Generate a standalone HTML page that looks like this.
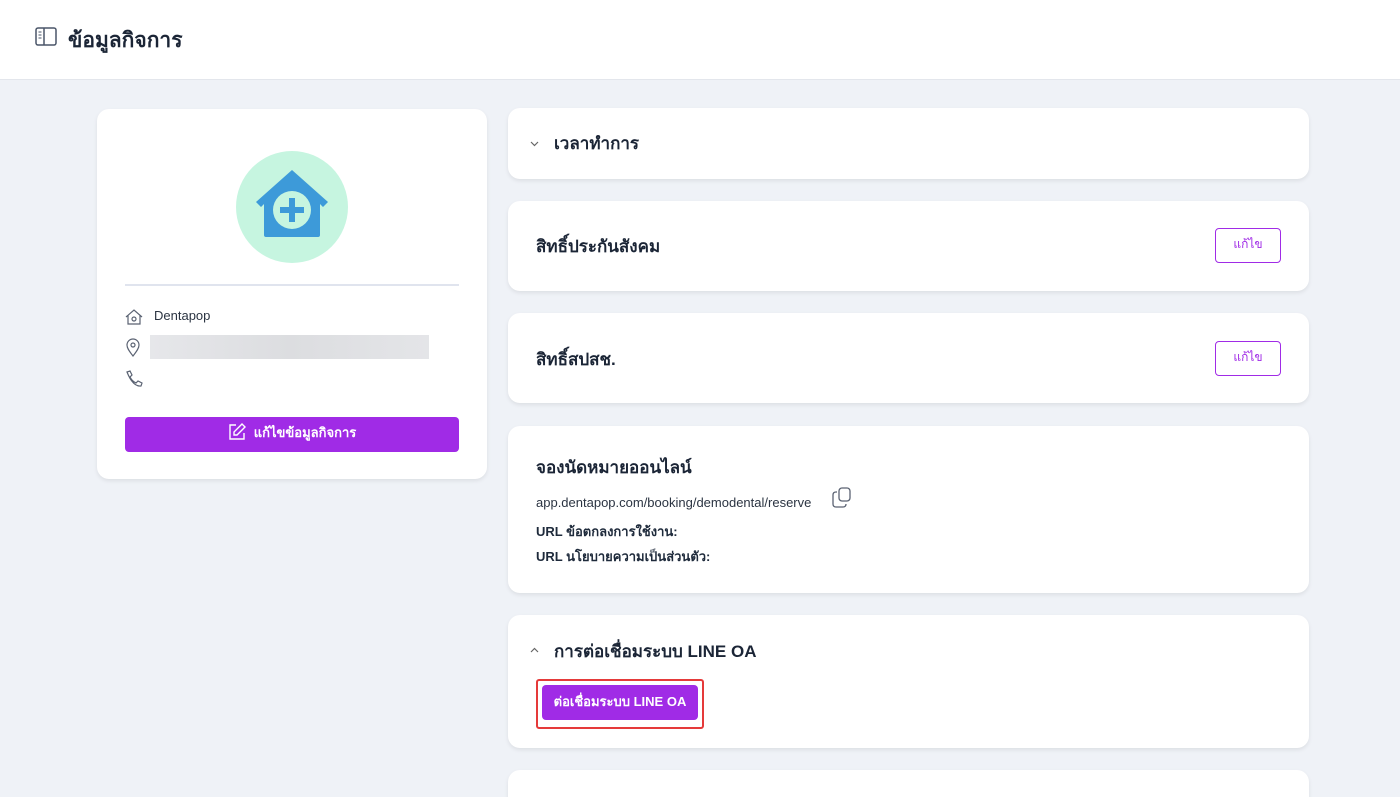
<!DOCTYPE html>
<html><head><meta charset="utf-8"><style>
*{box-sizing:border-box;margin:0;padding:0}
html,body{width:1400px;height:797px;overflow:hidden}
body{background:#eff2f7;font-family:"Liberation Sans","Noto Sans CJK SC",sans-serif;color:#1e2a3b;position:relative}
.hdr{position:absolute;left:0;top:0;width:1400px;height:80px;background:#fff;border-bottom:1px solid #e3e6ec}
.hdr h1{position:absolute;left:68px;top:24px;font-size:21px;font-weight:bold;color:#1b2536}
.card{position:absolute;background:#fff;border-radius:12px;box-shadow:0 2px 4px rgba(0,0,0,.08)}
.t{position:absolute;font-size:17px;font-weight:bold;color:#1b2536}
.ebtn{position:absolute;right:28px;width:66px;height:35px;border:1px solid #a02be6;border-radius:4px;color:#a02be6;font-size:12px;text-align:center;line-height:31px}
.pbtn{position:absolute;background:#a02be6;color:#fff;border-radius:4px;font-size:13px;font-weight:bold;text-align:center}
</style></head><body>
<div class="hdr">
<svg style="position:absolute;left:35px;top:27px" width="22" height="19" viewBox="0 0 22 19"><rect x="1" y="1" width="20" height="17" rx="2" fill="none" stroke="#4a5568" stroke-width="1.5"/><line x1="9" y1="1" x2="9" y2="18" stroke="#4a5568" stroke-width="1.5"/><line x1="3.5" y1="5" x2="6.5" y2="5" stroke="#4a5568"/><line x1="3.5" y1="8" x2="6.5" y2="8" stroke="#4a5568"/><line x1="3.5" y1="11" x2="6.5" y2="11" stroke="#4a5568"/></svg>
<h1>ข้อมูลกิจการ</h1></div>

<div class="card" style="left:97px;top:109px;width:390px;height:370px">
<div style="position:absolute;left:139px;top:42px;width:112px;height:112px;border-radius:50%;background:#c6f5e0"></div>
<svg style="position:absolute;left:155px;top:59px" width="80" height="72" viewBox="0 0 80 72"><path d="M40 2 L76 34 L71 39 L68 36 L68 67 Q68 69 66 69 L14 69 Q12 69 12 67 L12 36 L9 39 L4 34 Z" fill="#3d9ad9"/><circle cx="40" cy="42" r="19" fill="#c6f5e0"/><rect x="37" y="30" width="6" height="24" fill="#3d9ad9"/><rect x="28" y="39" width="24" height="6" fill="#3d9ad9"/></svg>
<div style="position:absolute;left:28px;top:175px;width:334px;height:2px;background:#e0e4ee"></div>
<svg style="position:absolute;left:28px;top:199px" width="18" height="18" viewBox="0 0 18 18" fill="none" stroke="#5a6272" stroke-width="1.2"><path d="M1 9 L9 2 L17 9 M3 7.5 V16 H15 V7.5"/><circle cx="9" cy="11" r="2"/></svg>
<div style="position:absolute;left:57px;top:199px;font-size:13px;color:#2b3442">Dentapop</div>
<svg style="position:absolute;left:29px;top:229px" width="14" height="19" viewBox="0 0 14 19" fill="none" stroke="#5a6272" stroke-width="1.2"><path d="M7 18 C3 13 1 10 1 7 A6 6 0 0 1 13 7 C13 10 11 13 7 18Z"/><circle cx="7" cy="7" r="2"/></svg>
<div style="position:absolute;left:53px;top:226px;width:279px;height:24px;background:linear-gradient(90deg,#e6e7ea,#dcdde0,#e4e5e8)"></div>
<svg style="position:absolute;left:28px;top:261px" width="18" height="18" viewBox="0 0 18 18" fill="none" stroke="#5a6272" stroke-width="1.2"><path d="M2 2 L5 1 L7 5 L5 7 Q7 11 11 13 L13 11 L17 13 L16 16 Q8 17 2 2Z"/></svg>
<div class="pbtn" style="left:28px;top:308px;width:334px;height:35px;line-height:32px"><svg style="vertical-align:-4px;margin-right:8px" width="18" height="18" viewBox="0 0 18 18" fill="none" stroke="#fff" stroke-width="1.4"><path d="M8 2 H2 V16 H16 V10"/><path d="M14 1 L17 4 L9 12 L6 12 L6 9 Z"/></svg>แก้ไขข้อมูลกิจการ</div>
</div>

<div class="card" style="left:508px;top:108px;width:801px;height:71px">
<svg style="position:absolute;left:22px;top:33px" width="9" height="6" viewBox="0 0 9 6" fill="none" stroke="#666" stroke-width="1.2"><path d="M1 1 L4.5 4.5 L8 1"/></svg>
<div class="t" style="left:46px;top:22px">เวลาทำการ</div></div>

<div class="card" style="left:508px;top:201px;width:801px;height:90px">
<div class="t" style="left:28px;top:32px">สิทธิ์ประกันสังคม</div><div class="ebtn" style="top:27px">แก้ไข</div></div>

<div class="card" style="left:508px;top:313px;width:801px;height:90px">
<div class="t" style="left:28px;top:33px">สิทธิ์สปสช.</div><div class="ebtn" style="top:28px">แก้ไข</div></div>

<div class="card" style="left:508px;top:426px;width:801px;height:167px">
<div class="t" style="left:28px;top:28px">จองนัดหมายออนไลน์</div>
<div style="position:absolute;left:28px;top:69px;font-size:13px;color:#2b3442">app.dentapop.com/booking/demodental/reserve</div>
<svg style="position:absolute;left:324px;top:61px" width="20" height="22" viewBox="0 0 20 22" fill="none" stroke="#5a6272" stroke-width="1.3"><rect x="7" y="1" width="11" height="13" rx="3"/><path d="M5 5 H4 Q1 5 1 8 V17 Q1 20 4 20 H11 Q14 20 14 17"/></svg>
<div style="position:absolute;left:28px;top:95px;font-size:13px;font-weight:bold">URL ข้อตกลงการใช้งาน:</div>
<div style="position:absolute;left:28px;top:120px;font-size:13px;font-weight:bold">URL นโยบายความเป็นส่วนตัว:</div>
</div>

<div class="card" style="left:508px;top:615px;width:801px;height:133px">
<svg style="position:absolute;left:22px;top:32px" width="9" height="6" viewBox="0 0 9 6" fill="none" stroke="#666" stroke-width="1.2"><path d="M1 5 L4.5 1.5 L8 5"/></svg>
<div class="t" style="left:46px;top:23px">การต่อเชื่อมระบบ LINE OA</div>
<div style="position:absolute;left:28px;top:64px;width:168px;height:50px;border:2px solid #e53a3a;border-radius:3px"></div>
<div class="pbtn" style="left:34px;top:70px;width:156px;height:35px;line-height:33px">ต่อเชื่อมระบบ LINE OA</div>
</div>

<div class="card" style="left:508px;top:770px;width:801px;height:60px"></div>
</body></html>
